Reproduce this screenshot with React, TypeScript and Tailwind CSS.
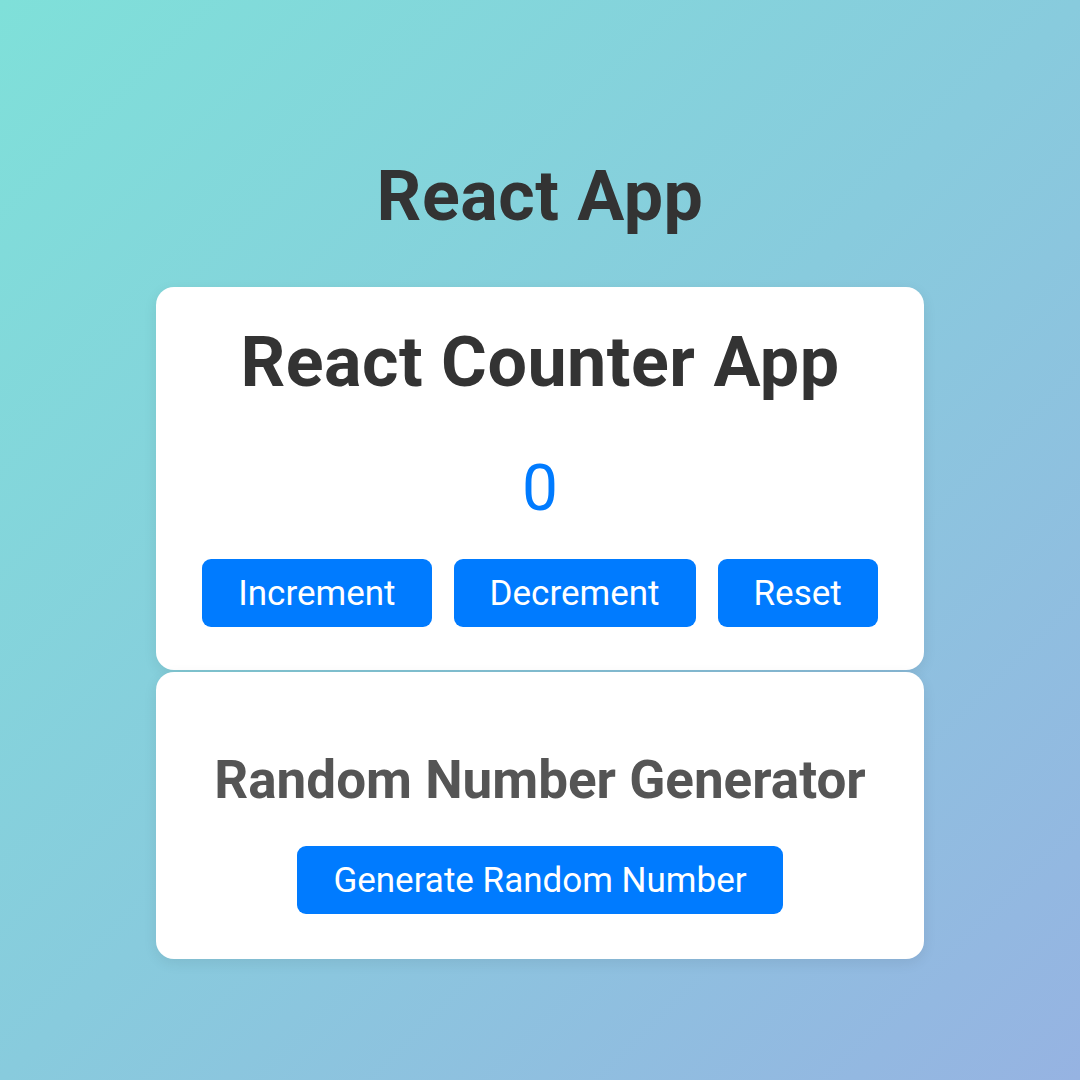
import { useState } from 'react';

export default function App() {
  const [count, setCount] = useState(0);
  const [random, setRandom] = useState<number | null>(null);

  const btn =
    'h-[68px] px-[36px] rounded-[9px] bg-[#007bff] text-white text-[35px] leading-none font-normal';

  return (
    <div className="min-h-screen w-full bg-[linear-gradient(135deg,#7fe0d9_0%,#88cbdd_50%,#96b3e2_100%)] font-['Roboto',sans-serif] flex flex-col items-center pt-[156px]">
      <h1 className="text-[70px] leading-[80px] tracking-[0.5px] font-bold text-[#333]">React App</h1>

      {/* Counter card */}
      <div className="mt-[51px] w-[768px] bg-white rounded-[18px] shadow-[0_4px_14px_rgba(0,0,0,0.08)] flex flex-col items-center pt-[37px] pb-[43px]">
        <h2 className="text-[70px] leading-[76px] tracking-[0.5px] font-bold text-[#333]">React Counter App</h2>
        <p className="mt-[51px] text-[64px] leading-[76px] text-[#007bff]">{count}</p>
        <div className="mt-[32px] flex gap-[22px]">
          <button className={btn} onClick={() => setCount(count + 1)}>Increment</button>
          <button className={btn} onClick={() => setCount(count - 1)}>Decrement</button>
          <button className={btn} onClick={() => setCount(0)}>Reset</button>
        </div>
      </div>

      {/* Random number card */}
      <div className="mt-[2px] w-[768px] bg-white rounded-[18px] shadow-[0_4px_14px_rgba(0,0,0,0.08)] flex flex-col items-center pt-[78px] pb-[45px]">
        <h2 className="text-[53px] leading-[60px] font-bold text-[#555]">Random Number Generator</h2>
        {random !== null && <p className="text-[32px] text-[#333]">{random}</p>}
        <button
          className={`mt-[36px] ${btn}`}
          onClick={() => setRandom(Math.floor(Math.random() * 100) + 1)}
        >
          Generate Random Number
        </button>
      </div>
    </div>
  );
}
